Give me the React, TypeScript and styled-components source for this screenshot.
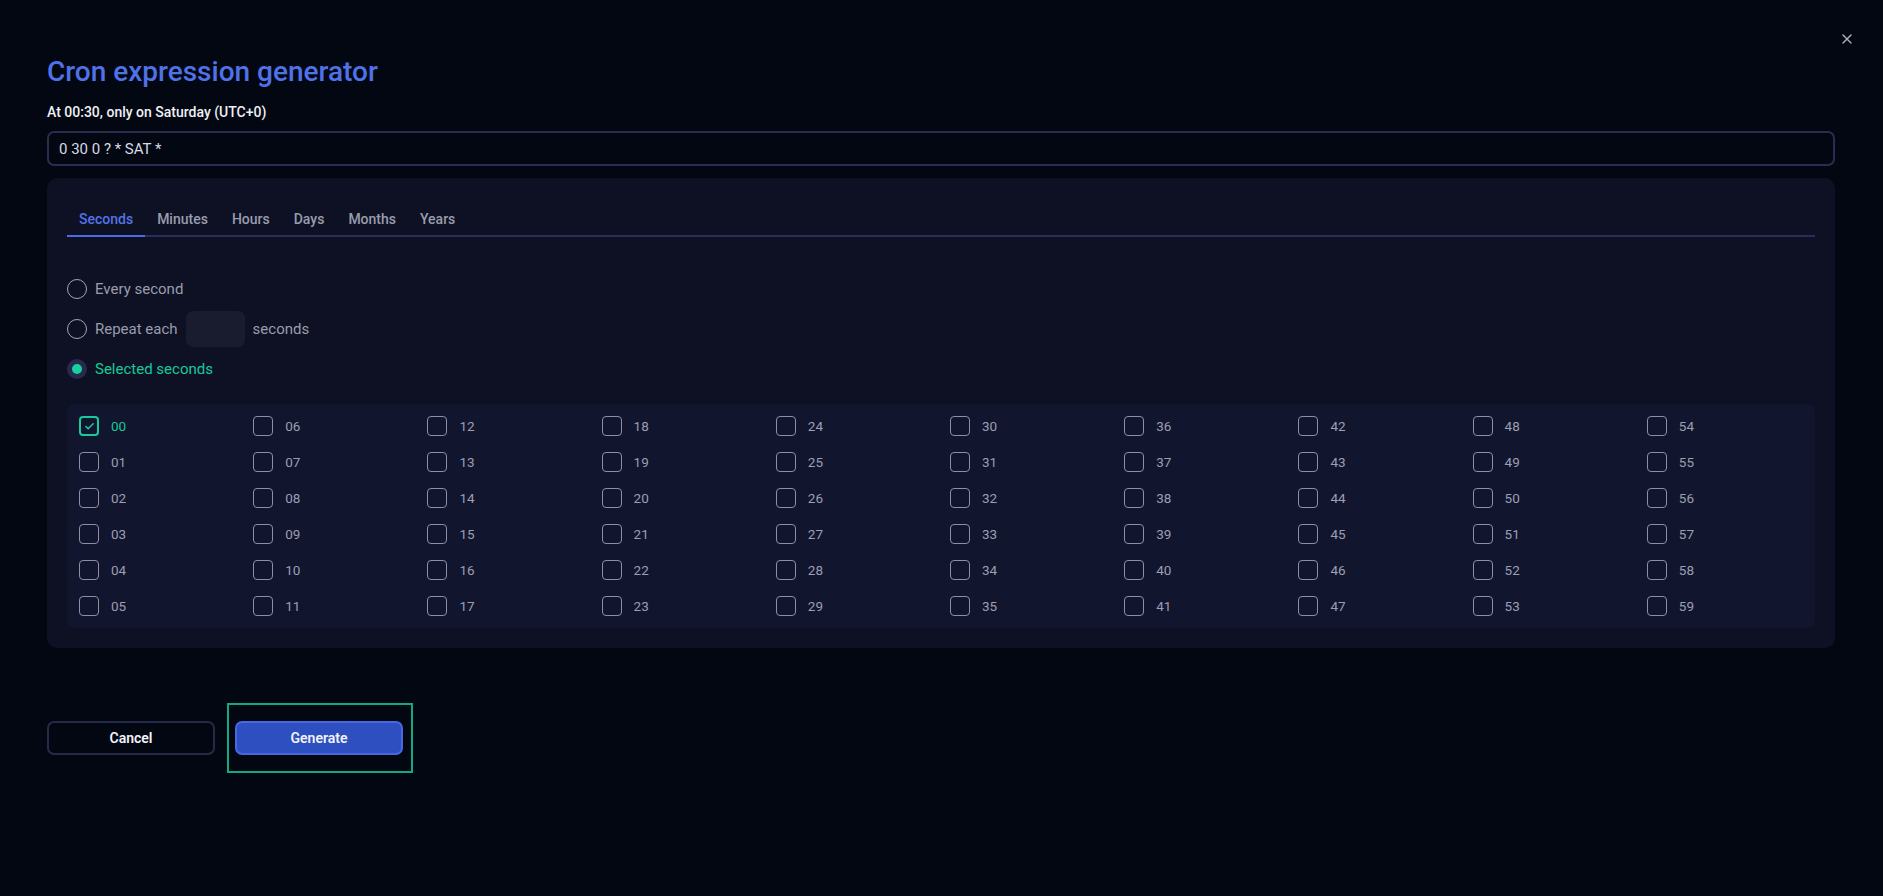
import React, { useState } from "react";
import styled, { createGlobalStyle } from "styled-components";
import { X, Check } from "lucide-react";

const GlobalStyle = createGlobalStyle`
  body {
    margin: 0;
    background: #020711;
    font-family: Roboto, "Liberation Sans", sans-serif;
  }
`;

const StyledModal = styled.div`
  position: relative;
  min-height: 896px;
  box-sizing: border-box;
  padding: 56px 48px 0 47px;
  background: #020711;
`;

const CloseButton = styled.button`
  position: absolute;
  top: 31px;
  right: 28px;
  width: 16px;
  height: 16px;
  padding: 0;
  border: none;
  background: transparent;
  color: #a9acba;
  display: flex;
  align-items: center;
  justify-content: center;
  cursor: pointer;
`;

const Title = styled.h1`
  margin: 0;
  font-size: 28px;
  line-height: 32px;
  font-weight: 500;
  color: #4f72e8;
`;

const Summary = styled.p`
  margin: 16px 0 0;
  font-size: 14px;
  line-height: 16px;
  font-weight: 500;
  color: #eef0f6;
`;

const ExpressionInput = styled.input`
  display: block;
  width: 100%;
  box-sizing: border-box;
  margin-top: 11px;
  height: 35px;
  padding: 0 10px;
  border: 2px solid #2b2d50;
  border-radius: 7px;
  background: #020711;
  color: #d8dae6;
  font-family: inherit;
  font-size: 15px;
  outline: none;
`;

const Panel = styled.section`
  margin-top: 12px;
  padding: 20px;
  background: #0d1123;
  border-radius: 10px;
`;

const TabList = styled.div`
  display: flex;
  border-bottom: 2px solid #2a2e5a;
`;

const Tab = styled.button<{ $active?: boolean }>`
  padding: 11px 12px 6px;
  margin-bottom: -2px;
  border: none;
  border-bottom: 2px solid ${(p) => (p.$active ? "#4c6be4" : "transparent")};
  background: transparent;
  color: ${(p) => (p.$active ? "#5473e6" : "#9a9cae")};
  font-family: inherit;
  font-size: 14px;
  line-height: 20px;
  font-weight: 500;
  cursor: pointer;
`;

const Options = styled.div`
  display: flex;
  flex-direction: column;
  gap: 4px;
  margin-top: 34px;
`;

const OptionRow = styled.label<{ $active?: boolean }>`
  display: flex;
  align-items: center;
  height: 36px;
  gap: 8px;
  font-size: 15px;
  color: ${(p) => (p.$active ? "#17c99b" : "#9a9cae")};
  cursor: pointer;
`;

const Radio = styled.span<{ $checked?: boolean }>`
  width: 20px;
  height: 20px;
  box-sizing: border-box;
  border-radius: 50%;
  border: ${(p) => (p.$checked ? "none" : "1.5px solid #a3a6b8")};
  background: ${(p) => (p.$checked ? "#272a4c" : "transparent")};
  display: flex;
  align-items: center;
  justify-content: center;
  flex-shrink: 0;

  &::after {
    content: "";
    display: ${(p) => (p.$checked ? "block" : "none")};
    width: 10px;
    height: 10px;
    border-radius: 50%;
    background: #17d19f;
  }
`;

const RepeatInput = styled.input`
  width: 59px;
  height: 36px;
  box-sizing: border-box;
  border: none;
  border-radius: 7px;
  background: #181c2e;
  color: #d8dae6;
  font-family: inherit;
  font-size: 14px;
  text-align: center;
  outline: none;
`;

const SecondsGrid = styled.div`
  margin-top: 17px;
  padding: 12px;
  background: #12152e;
  border-radius: 7px;
  display: grid;
  grid-template-columns: repeat(10, 1fr);
  grid-template-rows: repeat(6, 20px);
  grid-auto-flow: column;
  column-gap: 18px;
  row-gap: 16px;
`;

const SecondItem = styled.label<{ $checked?: boolean }>`
  display: flex;
  align-items: center;
  gap: 12px;
  font-size: 13.5px;
  color: ${(p) => (p.$checked ? "#17c99b" : "#9c9eb2")};
  cursor: pointer;
`;

const Box = styled.span<{ $checked?: boolean }>`
  width: 20px;
  height: 20px;
  box-sizing: border-box;
  border-radius: 4px;
  border: ${(p) => (p.$checked ? "2px solid #17c99b" : "1.5px solid #8d8fa3")};
  display: flex;
  align-items: center;
  justify-content: center;
  color: #17c99b;
  flex-shrink: 0;
`;

const Actions = styled.div`
  display: flex;
  align-items: center;
  gap: 12px;
  margin-top: 55px;
`;

const FocusRing = styled.div`
  padding: 16px 8px 16px 6px;
  border: 2px solid #12a982;
`;

const Button = styled.button<{ $primary?: boolean }>`
  width: 168px;
  height: 34px;
  border-radius: 7px;
  border: 2px solid ${(p) => (p.$primary ? "#4a67e2" : "#262a48")};
  background: ${(p) => (p.$primary ? "#2e4fc0" : "transparent")};
  color: #f2f3f8;
  font-family: inherit;
  font-size: 14px;
  font-weight: 600;
  cursor: pointer;
`;

const tabs = ["Seconds", "Minutes", "Hours", "Days", "Months", "Years"];

const App: React.FunctionComponent = () => {
  const [activeTab, setActiveTab] = useState("Seconds");
  const [selected, setSelected] = useState<number[]>([0]);

  const toggle = (n: number) =>
    setSelected((s) => (s.includes(n) ? s.filter((x) => x !== n) : [...s, n]));

  return (
    <StyledModal>
      <GlobalStyle />
      <CloseButton aria-label="Close">
        <X size={16} strokeWidth={2.2} />
      </CloseButton>

      <Title>Cron expression generator</Title>
      <Summary>At 00:30, only on Saturday (UTC+0)</Summary>
      <ExpressionInput defaultValue="0 30 0 ? * SAT *" />

      <Panel>
        <TabList>
          {tabs.map((t) => (
            <Tab key={t} $active={t === activeTab} onClick={() => setActiveTab(t)}>
              {t}
            </Tab>
          ))}
        </TabList>

        <Options>
          <OptionRow>
            <Radio />
            Every second
          </OptionRow>
          <OptionRow>
            <Radio />
            Repeat each
            <RepeatInput />
            seconds
          </OptionRow>
          <OptionRow $active>
            <Radio $checked />
            Selected seconds
          </OptionRow>
        </Options>

        <SecondsGrid>
          {Array.from({ length: 60 }, (_, n) => {
            const checked = selected.includes(n);
            return (
              <SecondItem key={n} $checked={checked} onClick={() => toggle(n)}>
                <Box $checked={checked}>
                  {checked && <Check size={11} strokeWidth={3.5} />}
                </Box>
                {String(n).padStart(2, "0")}
              </SecondItem>
            );
          })}
        </SecondsGrid>
      </Panel>

      <Actions>
        <Button>Cancel</Button>
        <FocusRing>
          <Button $primary>Generate</Button>
        </FocusRing>
      </Actions>
    </StyledModal>
  );
};

export default App;
